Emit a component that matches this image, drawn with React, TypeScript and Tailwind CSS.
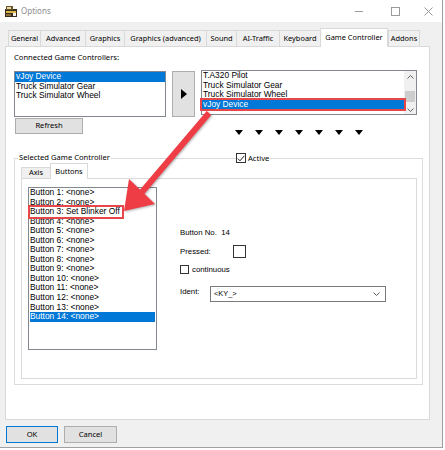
import React from 'react';

const mainTabs = [
  { label: 'General', width: 'w-[32px]' },
  { label: 'Advanced', width: 'w-[45px]' },
  { label: 'Graphics', width: 'w-[39px]' },
  { label: 'Graphics (advanced)', width: 'w-[82px]' },
  { label: 'Sound', width: 'w-[30px]' },
  { label: 'AI-Traffic', width: 'w-[43px]' },
  { label: 'Keyboard', width: 'w-[41px]' },
  { label: 'Game Controller', width: 'w-[68px]', active: true },
  { label: 'Addons', width: 'w-[32px]', last: true },
];

const connected = ['vJoy Device', 'Truck Simulator Gear', 'Truck Simulator Wheel'];
const available = ['T.A320 Pilot', 'Truck Simulator Gear', 'Truck Simulator Wheel', 'vJoy Device'];

const buttons = Array.from({ length: 14 }, (_, i) => ({
  id: i + 1,
  action: i === 2 ? 'Set Blinker Off' : '<none>',
}));

const LIST = "font-['Liberation_Sans',Arial,sans-serif] text-[8.4px] leading-[9.6px]";
const LABEL = "font-['Liberation_Sans',Arial,sans-serif] text-[7.8px] leading-[10px]";

function TitleIcon() {
  return (
    <svg width="12" height="11" viewBox="0 0 12 11">
      <rect x="0" y="3" width="12" height="8" fill="#3a2c1c" />
      <rect x="1" y="0" width="7" height="4" fill="#6b5530" />
      <rect x="2" y="1" width="4" height="2" fill="#e8d9a0" />
      <rect x="1" y="5" width="10" height="2" fill="#d9b84a" />
      <rect x="8" y="7" width="3" height="3" fill="#f2f2f2" />
      <rect x="1" y="8" width="5" height="2" fill="#8a6d3b" />
    </svg>
  );
}

function TitleBar() {
  return (
    <div className="flex items-center h-[22px] bg-white pl-[5px]">
      <TitleIcon />
      <span className="ml-[4px] text-[8px] text-[#8c8c8c] leading-none">Options</span>
      <div className="ml-auto w-[8px] h-px bg-[#9a9a9a]" />
      <div className="ml-[28px] w-[9px] h-[9px] border border-[#9a9a9a]" />
      <svg className="ml-[24px] mr-[9px]" width="9" height="9" viewBox="0 0 9 9">
        <path d="M0.5 0.5 L8.5 8.5 M8.5 0.5 L0.5 8.5" stroke="#9a9a9a" strokeWidth="1" />
      </svg>
    </div>
  );
}

function MainTabs() {
  return (
    <div className="relative z-10 flex items-end h-[18px] mt-[6px] pl-[8px]">
      {mainTabs.map((t) =>
        t.active ? (
          <div
            key={t.label}
            className={`${t.width} h-[19px] -mb-px flex items-center justify-center bg-white border-t border-l border-r border-[#d9d9d9] text-[7.4px] leading-none`}
          >
            {t.label}
          </div>
        ) : (
          <div
            key={t.label}
            className={`${t.width} h-[16px] flex items-center justify-center bg-[#f0f0f0] border-t border-l border-[#d9d9d9] text-[7.4px] leading-none ${
              t.last ? 'border-r' : ''
            }`}
          >
            {t.label}
          </div>
        )
      )}
    </div>
  );
}

function DownTriangle() {
  return (
    <svg width="8" height="5" viewBox="0 0 8 5">
      <polygon points="0,0 8,0 4,5" fill="#000" />
    </svg>
  );
}

function ControllerLists() {
  return (
    <div className="flex items-start mt-[7px] ml-[8px]">
      {/* connected controllers */}
      <div className={`mt-[1px] w-[152px] h-[46px] bg-white border border-[#828790] ${LIST}`}>
        {connected.map((name, i) => (
          <div
            key={name}
            className={`h-[9.6px] pl-[1px] whitespace-nowrap ${i === 0 ? 'bg-[#0078d7] text-white' : ''}`}
          >
            {name}
          </div>
        ))}
      </div>

      {/* move button */}
      <div className="mt-[1px] ml-[6px] w-[23px] h-[46px] flex items-center justify-center bg-[#e1e1e1] border border-[#adadad]">
        <svg width="6" height="10" viewBox="0 0 6 10">
          <polygon points="0,0 6,5 0,10" fill="#000" />
        </svg>
      </div>

      {/* available controllers */}
      <div className={`ml-[6px] w-[216px] h-[45px] flex bg-white border border-[#828790] ${LIST}`}>
        <div className="flex-1">
          {available.map((name, i) => (
            <div
              key={name}
              className={`h-[9.6px] pl-[1px] whitespace-nowrap ${
                i === 3 ? 'relative bg-[#0078d7] text-white shadow-[0_0_0_2px_#e8474a]' : ''
              }`}
            >
              {name}
            </div>
          ))}
        </div>
        <div className="w-[12px] flex flex-col items-center bg-[#f0f0f0]">
          <svg className="mt-[4px]" width="7" height="4" viewBox="0 0 7 4">
            <path d="M0.5 3.5 L3.5 0.5 L6.5 3.5" stroke="#606060" fill="none" />
          </svg>
          <div className="mt-[12px] w-[10px] h-[11px] bg-[#cdcdcd]" />
          <svg className="mt-[6px]" width="7" height="4" viewBox="0 0 7 4">
            <path d="M0.5 0.5 L3.5 3.5 L6.5 0.5" stroke="#606060" fill="none" />
          </svg>
        </div>
      </div>
    </div>
  );
}

function ButtonsTab() {
  return (
    <div className="flex w-[396px] h-[201px] border border-[#d9d9d9] bg-white">
      <div className={`ml-[6px] mt-[8px] w-[129px] h-[163px] px-[1px] bg-white border border-[#828790] ${LIST}`}>
        {buttons.map((b) => (
          <div
            key={b.id}
            className={`h-[9.55px] whitespace-nowrap ${b.id === 14 ? 'bg-[#0078d7] text-white' : ''}`}
          >
            {b.id === 3 ? (
              <span className="relative inline-block pr-[2px] shadow-[0_0_0_2px_#e8474a]">
                Button {b.id}: {b.action}
              </span>
            ) : (
              <span>
                Button {b.id}: {b.action}
              </span>
            )}
          </div>
        ))}
      </div>

      <div className={`ml-[23px] mt-[49px] flex flex-col ${LABEL}`}>
        <div className="h-[10px]">Button No.&nbsp; 14</div>
        <div className="mt-[7px] flex items-center h-[13px]">
          <span className="w-[53px]">Pressed:</span>
          <div className="w-[13px] h-[13px] border border-[#333]" />
        </div>
        <div className="mt-[7px] flex items-center h-[9px]">
          <div className="w-[9px] h-[9px] border border-[#333]" />
          <span className="ml-[3px]">continuous</span>
        </div>
        <div className="mt-[12px] flex items-start">
          <span className="w-[30px] mt-[1px]">Ident:</span>
          <div className="w-[176px] h-[16px] flex items-center border border-[#7a7a7a] bg-white">
            <span className="ml-[3px] text-[7.4px]">&lt;KY_&gt;</span>
            <svg className="ml-auto mr-[5px]" width="7" height="4" viewBox="0 0 7 4">
              <path d="M0.5 0.5 L3.5 3.5 L6.5 0.5" stroke="#555" fill="none" />
            </svg>
          </div>
        </div>
      </div>
    </div>
  );
}

function SelectedController() {
  return (
    <div className="relative mt-[23px] ml-[8px] w-[409px] h-[227px] border border-[#dcdcdc]">
      <span className="absolute left-[3px] -top-[7px] px-[1px] bg-white text-[7.6px] leading-[11px]">
        Selected Game Controller
      </span>
      <div className="absolute left-[221px] -top-[6px] flex items-center bg-white pr-[1px]">
        <div className="w-[10px] h-[10px] border border-[#333] bg-white flex items-center justify-center">
          <svg width="8" height="7" viewBox="0 0 8 7">
            <path d="M0.8 3.6 L3 5.8 L7.3 0.8" stroke="#222" strokeWidth="1" fill="none" />
          </svg>
        </div>
        <span className="ml-[2px] text-[7.6px] leading-[10px]">Active</span>
      </div>

      <div className="pt-[4px] pl-[6px]">
        <div className="relative z-10 flex items-end h-[15px]">
          <div className="w-[29px] h-[11px] flex items-center justify-center bg-[#f0f0f0] border-t border-l border-[#d9d9d9] text-[7.4px] leading-none">
            Axis
          </div>
          <div className="w-[38px] h-[16px] -mb-px flex items-center justify-center bg-white border-t border-l border-r border-[#d9d9d9] text-[7.4px] leading-none">
            Buttons
          </div>
        </div>
        <ButtonsTab />
      </div>
    </div>
  );
}

function Panel() {
  return (
    <div className="ml-[5px] w-[425px] h-[374px] flex flex-col bg-white border border-[#d9d9d9]">
      <div className="mt-[5px] ml-[8px] h-[11px] text-[7.6px] leading-[11px]">Connected Game Controllers:</div>
      <ControllerLists />
      <div className="flex items-start">
        <div className="mt-[1px] ml-[9px] w-[68px] h-[16px] flex items-center justify-center bg-[#e1e1e1] border border-[#adadad] text-[7.6px] leading-none">
          Refresh
        </div>
        <div className="ml-[152px] mt-[13px] flex gap-[12px]">
          {Array.from({ length: 7 }, (_, i) => (
            <DownTriangle key={i} />
          ))}
        </div>
      </div>
      <SelectedController />
    </div>
  );
}

function Footer() {
  return (
    <div className="flex gap-[6px] mt-[6px] pl-[6px]">
      <div className="w-[52px] h-[17px] flex items-center justify-center bg-[#e1e1e1] border border-[#0078d7] text-[7.6px] leading-none">
        OK
      </div>
      <div className="w-[53px] h-[17px] flex items-center justify-center bg-[#e1e1e1] border border-[#adadad] text-[7.6px] leading-none">
        Cancel
      </div>
    </div>
  );
}

// red callout pointing from the chosen device to the mapped button
function Callout() {
  return (
    <svg
      className="absolute inset-0 pointer-events-none drop-shadow-[1px_1px_1px_rgba(0,0,0,0.3)]"
      width="445"
      height="450"
      viewBox="0 0 445 450"
    >
      <line x1="209" y1="113" x2="142" y2="192" stroke="#ee3d45" strokeWidth="6" />
      <polygon points="124,211 155,204 129,179" fill="#ee3d45" />
    </svg>
  );
}

export default function App() {
  return (
    <div className="relative w-[445px] h-[450px] bg-white overflow-hidden font-['Noto_Sans',sans-serif] text-black">
      <div className="flex flex-col w-[443px] h-[448px] bg-[#f0f0f0] border-r border-b border-[#a0a0a0]">
        <TitleBar />
        <MainTabs />
        <Panel />
        <Footer />
      </div>
      <Callout />
    </div>
  );
}
